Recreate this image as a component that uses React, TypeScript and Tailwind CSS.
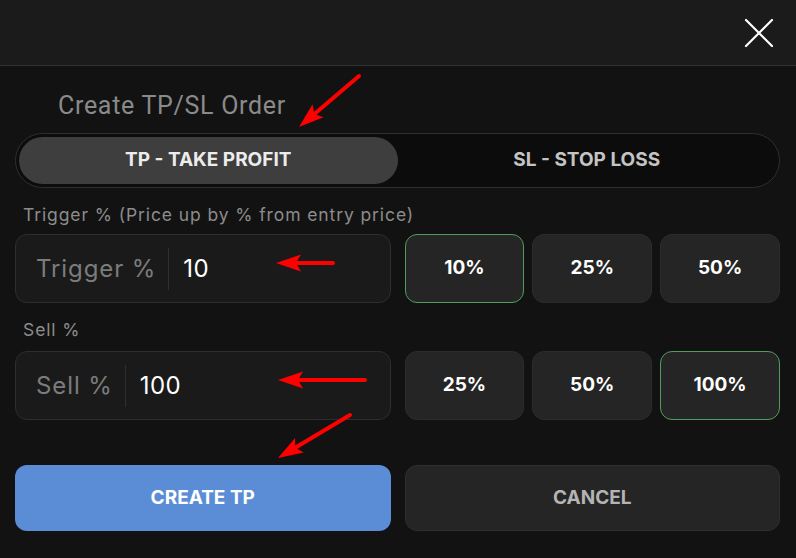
import React from "react";

function PctButton({ label, active }: { label: string; active?: boolean }) {
  return (
    <button
      className={
        "h-full rounded-[12px] bg-[#252525] text-[19px] font-bold text-white border " +
        (active ? "border-[#4f9d5e]" : "border-[#2c2c2c]")
      }
    >
      {label}
    </button>
  );
}

function InputRow({ label, value, pcts, activeIdx }: { label: string; value: string; pcts: string[]; activeIdx: number }) {
  return (
    <div className="grid grid-cols-2 gap-[14px] h-[69px]">
      <div className="flex items-center rounded-[12px] border border-[#2e2e2e] bg-[#1a1a1a] pl-5">
        <span className="text-[24px] tracking-[0.9px] text-[#7c7c7c]">{label}</span>
        <span className="ml-[12px] mr-[14px] h-[42px] w-px bg-[#2f2f2f]" />
        <span className="text-[24px] tracking-[0.4px] text-white">{value}</span>
      </div>
      <div className="grid grid-cols-3 gap-2">
        {pcts.map((p, i) => (
          <PctButton key={p} label={p} active={i === activeIdx} />
        ))}
      </div>
    </div>
  );
}

function Arrow({ x1, y1, x2, y2 }: { x1: number; y1: number; x2: number; y2: number }) {
  const dx = x2 - x1;
  const dy = y2 - y1;
  const len = Math.sqrt(dx * dx + dy * dy);
  const ux = dx / len;
  const uy = dy / len;
  const hl = 25;
  const hw = 8.5;
  const bx = x2 - ux * hl;
  const by = y2 - uy * hl;
  const px = -uy * hw;
  const py = ux * hw;
  return (
    <g>
      <line x1={x1} y1={y1} x2={bx + ux * 4} y2={by + uy * 4} stroke="#ff0000" strokeWidth={4} strokeLinecap="round" />
      <polygon points={`${x2},${y2} ${bx + px},${by + py} ${bx + ux * 5},${by + uy * 5} ${bx - px},${by - py}`} fill="#ff0000" />
    </g>
  );
}

export default function App() {
  return (
    <div className="relative w-[796px] h-[558px] overflow-hidden bg-[#121212]" style={{ fontFamily: "Inter, 'Noto Sans', sans-serif" }}>
      <div className="h-[66px] bg-[#1b1b1b] border-b border-[#303030] flex items-center justify-end pr-[22px]">
        <svg width="30" height="30" viewBox="0 0 30 30">
          <path d="M2 2 L28 28 M28 2 L2 28" stroke="#ffffff" strokeWidth="2.2" strokeLinecap="round" />
        </svg>
      </div>
      <div className="pl-[15px] pr-[16px]">
        <div className="mt-[26px] pl-[43px] text-[25px] leading-[28px] tracking-[0.7px] text-[#8a8a8a]" style={{ fontFamily: "Roboto, sans-serif" }}>
          Create TP/SL Order
        </div>
        <div className="mt-[13px] h-[55px] rounded-full border border-[#2f2f2f] bg-[#0c0c0c] p-[3px] grid grid-cols-2">
          <div className="rounded-full bg-[#3e3e3e] flex items-center justify-center text-[19px] font-bold text-[#ececec]">
            TP - TAKE PROFIT
          </div>
          <div className="flex items-center justify-center text-[19px] font-bold text-[#c4c4c4]">SL - STOP LOSS</div>
        </div>
        <div className="mt-[15px] pl-2 text-[17.5px] leading-[24px] tracking-[0.9px] text-[#8c8c8c]">Trigger % (Price up by % from entry price)</div>
        <div className="mt-[7px]">
          <InputRow label="Trigger %" value="10" pcts={["10%", "25%", "50%"]} activeIdx={0} />
        </div>
        <div className="mt-[15px] pl-2 text-[17.5px] leading-[24px] tracking-[0.9px] text-[#8c8c8c]">Sell %</div>
        <div className="mt-[9px]">
          <InputRow label="Sell %" value="100" pcts={["25%", "50%", "100%"]} activeIdx={2} />
        </div>
        <div className="mt-[45px] grid grid-cols-2 gap-[14px] h-[66px]">
          <button className="rounded-[12px] bg-[#5b8dd6] text-[19px] font-bold text-white">CREATE TP</button>
          <button className="rounded-[12px] bg-[#252525] border border-[#2e2e2e] text-[19px] font-bold text-[#b4b4b4]">CANCEL</button>
        </div>
      </div>
      <svg className="absolute inset-0 pointer-events-none" width="796" height="558">
        <Arrow x1={359} y1={76} x2={299} y2={127} />
        <Arrow x1={333} y1={263} x2={276} y2={263} />
        <Arrow x1={365} y1={380} x2={278} y2={380} />
        <Arrow x1={350} y1={415} x2={278} y2={458} />
      </svg>
    </div>
  );
}
